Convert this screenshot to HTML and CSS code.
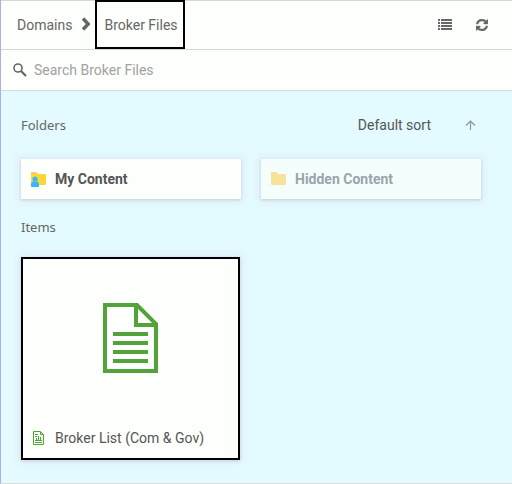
FILE: index.html
```html
<!DOCTYPE html>
<html lang="en">
<head>
    <meta charset="UTF-8">
    <meta name="viewport" content="width=device-width, initial-scale=1.0">
    <title>Broker Files</title>
    <link rel="stylesheet" href="styles.css">
</head>
<body>
    <div class="page">
        <header class="topbar">
            <nav class="breadcrumb">
                <a href="#" class="crumb">Domains</a>
                <svg class="chevron" width="10" height="14" viewBox="0 0 10 14">
                    <path d="M2 1.500L7.200 7L2 12.500" fill="none" stroke="#666" stroke-width="3.400"/>
                </svg>
                <a href="#" class="crumb current">Broker Files</a>
            </nav>
            <div class="actions">
                <button type="button" class="icon-button" aria-label="List view">
                    <svg width="14" height="12" viewBox="0 0 14 12" fill="#666" shape-rendering="crispEdges">
                        <path d="M0 0h2v2H0zM3 0h11v2H3zM0 3h2v2H0zM3 3h11v2H3zM0 6h2v2H0zM3 6h11v2H3zM0 9h2v2H0zM3 9h11v2H3z"/>
                    </svg>
                </button>
                <button type="button" class="icon-button" aria-label="Refresh">
                    <svg width="12" height="12" viewBox="0 0 1536 1536" fill="#666" stroke="#666" stroke-width="50">
                        <path d="M1511 928q0 5-1 7-64 268-268 434.500T764 1536q-146 0-282.500-55T238 1324l-129 129q-19 19-45 19t-45-19-19-45V960q0-26 19-45t45-19h448q26 0 45 19t19 45-19 45l-137 137q71 66 161 102t187 36q134 0 250-65t186-179q11-17 53-117 8-23 30-23h192q13 0 22.500 9.500t9.500 22.500zM1536 128v448q0 26-19 45t-45 19h-448q-26 0-45-19t-19-45 19-45l138-138Q969 256 768 256q-134 0-250 65T332 500q-11 17-53 117-8 23-30 23H50q-13 0-22.500-9.500T18 608v-7q65-268 270-434.500T768 0q146 0 284 55.500T1297 212l130-129q19-19 45-19t45 19 19 45z"/>
                    </svg>
                </button>
            </div>
        </header>

        <form class="search">
            <label for="search-box" aria-label="Search">
                <svg width="14" height="14" viewBox="0 0 14 14" fill="none" stroke="#666">
                    <circle cx="5" cy="5" r="4" stroke-width="1.600"/>
                    <path d="M8 8L13 13" stroke-width="2.200"/>
                </svg>
            </label>
            <input type="text" id="search-box" placeholder="Search Broker Files">
        </form>

        <main class="content">
            <div class="section-head">
                <h2>Folders</h2>
                <div class="sort">
                    <button type="button">Default sort</button>
                    <button type="button" class="icon-button" aria-label="Sort direction">
                        <svg width="11" height="10" viewBox="0 0 11 10" fill="none" stroke="#8b989f" stroke-width="1.200">
                            <path d="M5.500 10V1M1 5.500L5.500 1L10 5.500"/>
                        </svg>
                    </button>
                </div>
            </div>

            <div class="grid">
                <a href="#" class="card folder">
                    <svg width="16" height="16" viewBox="0 0 16 16">
                        <path d="M0 2q0-1 1-1h4l2 2h7q1 0 1 1v9q0 1-1 1H1q-1 0-1-1z" fill="#fdd835"/>
                        <path d="M0 3V2q0-1 1-1h4l2 2z" fill="#fbc96a"/>
                        <circle cx="4" cy="8" r="2.600" fill="#38b6ff"/>
                        <path d="M0 15v-2q0-2 2-2.500h4q2 .5 2 2.500v2q0 1-1 1H1q-1 0-1-1z" fill="#38b6ff"/>
                    </svg>
                    <span>My Content</span>
                </a>
                <a href="#" class="card folder hidden-folder">
                    <svg width="16" height="16" viewBox="0 0 16 16">
                        <path d="M0 2q0-1 1-1h4l2 2h7q1 0 1 1v9q0 1-1 1H1q-1 0-1-1z" fill="#f6e398"/>
                        <path d="M0 3V2q0-1 1-1h4l2 2z" fill="#f3dda6"/>
                    </svg>
                    <span>Hidden Content</span>
                </a>
            </div>

            <h2 class="items-title">Items</h2>

            <div class="grid">
                <a href="#" class="card item">
                    <div class="preview">
                        <svg width="55" height="70" viewBox="0 0 55 70" fill="none" stroke="#52a43a" stroke-width="4">
                            <path d="M2 2H34L53 21V68H2Z"/>
                            <path d="M33 2V22H53"/>
                            <path d="M10 31H45M10 40H45M10 49H45M10 58H45"/>
                        </svg>
                    </div>
                    <div class="item-name">
                        <svg width="11" height="14" viewBox="0 0 11 14" fill="none" stroke="#4aa632">
                            <path d="M.5.5H7.500L10.500 3.500V13.500H.5Z"/>
                            <path d="M7.500 1V3.500H10M2 3.500H5M2 5.500H4M2 9.500H9M2 11.500H9M3.500 7V9M5.500 5V9M7.500 6V9"/>
                        </svg>
                        <span>Broker List (Com &amp; Gov)</span>
                    </div>
                </a>
            </div>
        </main>
    </div>
</body>
</html>
```

FILE: styles.css
```css
* {
    box-sizing: border-box;
}
body {
    margin: 0;
    font-family: Roboto, Arial, sans-serif;
    font-size: 14px;
    line-height: 20px;
    color: #555;
}
a {
    color: inherit;
    text-decoration: none;
}
svg {
    display: block;
    flex-shrink: 0;
}
button {
    padding: 0;
    border: 0;
    background: none;
    font: inherit;
    color: inherit;
    cursor: pointer;
}
.page {
    display: flex;
    flex-direction: column;
    min-height: 100vh;
    border-left: 1px solid #a9b1e8;
    border-bottom: 1px solid #d8dcdc;
    background: #e3fafe;
}
.topbar {
    display: flex;
    justify-content: space-between;
    height: 50px;
    padding: 0 24px 0 16px;
    border-top: 1px solid #d8d8d8;
    border-bottom: 1px solid #d8d8d8;
    background: #fdfffd;
}
.breadcrumb {
    display: flex;
    align-items: center;
    color: #666;
}
.chevron {
    margin: 0 4px 2px 9px;
}
.current {
    display: flex;
    align-items: center;
    height: 49px;
    margin-top: -1px;
    padding: 0 5px 0 7px;
    border: 2px solid #000;
}
.actions {
    display: flex;
    align-items: center;
    gap: 24px;
}
.search {
    display: flex;
    align-items: center;
    gap: 7px;
    height: 41px;
    padding: 0 12px;
    border-bottom: 1px solid #d8d8d8;
    background: #fdfffd;
}
.search input {
    flex: 1;
    min-width: 0;
    padding: 0;
    border: 0;
    outline: 0;
    background: none;
    font: inherit;
    color: #555;
}
.search input::placeholder {
    color: #a2a2a2;
}
.content {
    flex: 1;
    padding: 24px 31px 23px 20px;
}
.section-head {
    display: flex;
    align-items: center;
    justify-content: space-between;
    margin-bottom: 24px;
}
h2 {
    margin: 0;
    font-family: "Noto Sans", sans-serif;
    font-size: 13px;
    font-weight: normal;
    line-height: 20px;
    color: #666;
}
.sort {
    display: flex;
    align-items: center;
    gap: 34px;
    padding-right: 5px;
}
.grid {
    display: grid;
    grid-template-columns: 1fr 1fr;
    gap: 20px;
}
.card {
    background: #fdfffd;
    box-shadow: 0 1px 3px rgba(0, 0, 0, 0.15), 0 0 6px 3px rgba(225, 235, 250, 0.7);
}
.folder {
    display: flex;
    align-items: center;
    gap: 8px;
    height: 40px;
    padding: 0 10px;
    font-weight: bold;
}
.hidden-folder {
    background: #f4fefd;
    color: #9aa5ab;
}
.items-title {
    margin: 18px 0 20px;
}
.item {
    display: flex;
    flex-direction: column;
    margin-right: 1px;
    border: 2px solid #000;
}
.preview {
    display: flex;
    justify-content: center;
    padding: 44px 0;
}
.item-name {
    display: flex;
    align-items: center;
    gap: 11px;
    padding: 11px 10px 10px;
}
```
